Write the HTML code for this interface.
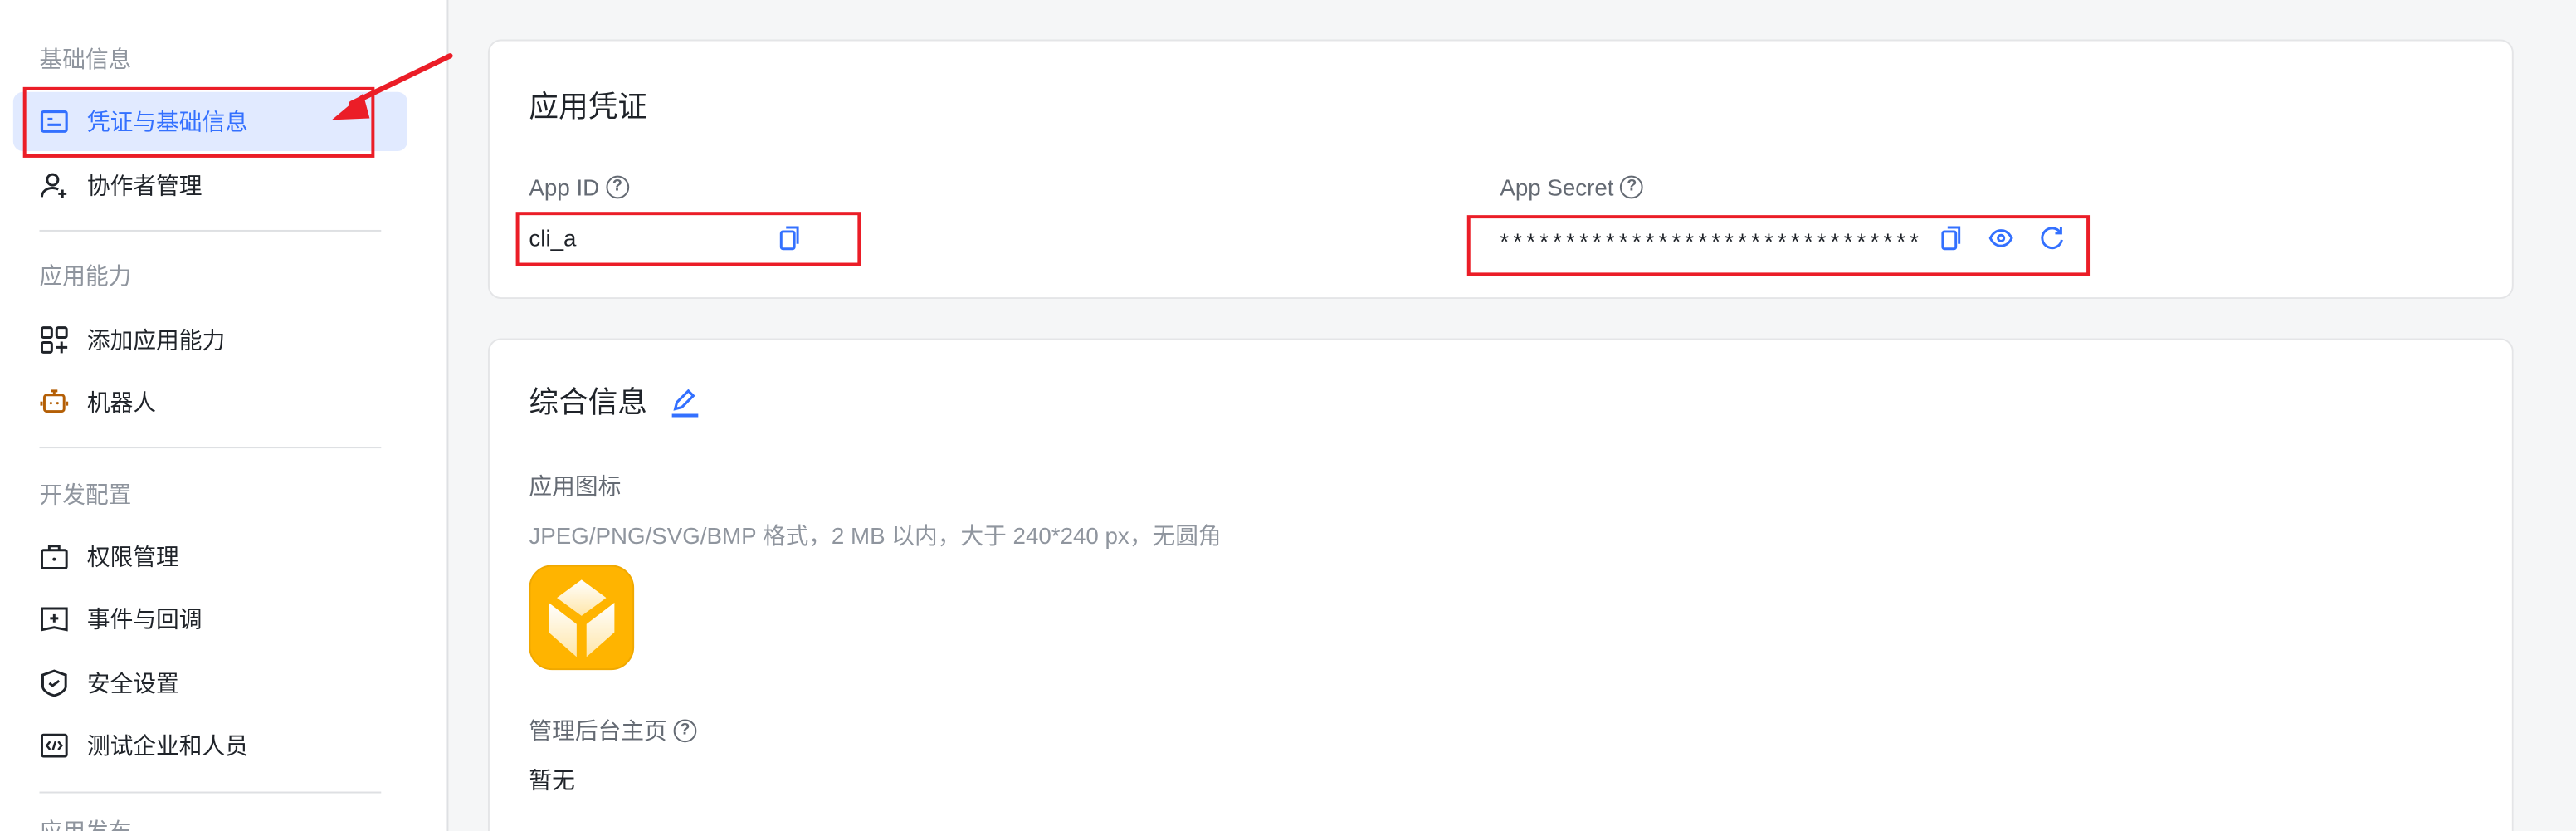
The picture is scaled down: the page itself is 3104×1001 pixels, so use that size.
<!DOCTYPE html>
<html><head><meta charset="utf-8">
<style>
html,body{margin:0;padding:0;overflow:hidden;}
body{width:3104px;height:1001px;overflow:hidden;background:#f5f6f7;font-family:"Liberation Sans","Noto Sans CJK SC",sans-serif;position:relative;}
#s{position:absolute;left:0;top:0;width:1568px;height:506px;overflow:hidden;transform:scale(1.9796,1.9783);transform-origin:0 0;}
.side{position:absolute;left:0;top:0;width:272px;height:506px;background:#fff;border-right:1px solid #dee0e3;overflow:hidden;}
.gt{position:absolute;left:24px;font-size:14px;color:#8f959e;line-height:20px;}
.it{position:absolute;left:24px;font-size:14px;color:#1f2329;line-height:20px;}
.it span{position:absolute;left:29px;top:0;white-space:nowrap;}
.it svg{position:absolute;left:0;top:1px;}
.dv{position:absolute;left:24px;width:208px;height:1px;background:#dee0e3;}
.card{position:absolute;left:297px;width:1231px;background:#fff;border:1px solid #e4e5e7;border-radius:8px;}
.t{position:absolute;font-size:18px;color:#1f2329;line-height:24px;}
.l{position:absolute;font-size:14px;color:#646a73;line-height:20px;white-space:nowrap;}
.v{position:absolute;font-size:14px;color:#1f2329;line-height:20px;white-space:nowrap;}
.q{position:relative;display:inline-block;width:12px;height:12px;border:1.3px solid #646a73;border-radius:50%;font-size:10px;line-height:12px;text-align:center;vertical-align:middle;top:-1px;margin-left:4px;color:#646a73;font-weight:bold;}
.red{position:absolute;border:2px solid #eb1d27;box-sizing:border-box;}
</style></head><body><div id="s">
<div class="side">
  <div class="gt" style="top:26px">基础信息</div>
  <div style="position:absolute;left:8px;top:56px;width:240px;height:36px;background:#e1eaff;border-radius:6px"></div>
  <div class="it" style="top:64px;color:#3370ff">
    <svg width="18" height="18" viewBox="0 0 18 18"><rect x="1.5" y="3" width="15" height="12" rx="1" fill="none" stroke="#3370ff" stroke-width="1.6"/><path d="M5 7.5h3M5 11h8" stroke="#3370ff" stroke-width="1.6"/></svg><span>凭证与基础信息</span></div>
  <div class="it" style="top:103px">
    <svg width="18" height="18" viewBox="0 0 18 18"><circle cx="8" cy="5.5" r="3.3" fill="none" stroke="#1f2329" stroke-width="1.5"/><path d="M1.5 16c0-3.5 3-5.5 6.5-5.5 1.5 0 2.5.3 3.5.8M14 11.5v5M11.5 14h5" fill="none" stroke="#1f2329" stroke-width="1.5"/></svg><span>协作者管理</span></div>
  <div class="dv" style="top:140px"></div>
  <div class="gt" style="top:158px">应用能力</div>
  <div class="it" style="top:197px">
    <svg width="18" height="18" viewBox="0 0 18 18"><rect x="1.5" y="1.5" width="6" height="6" rx="1" fill="none" stroke="#1f2329" stroke-width="1.5"/><rect x="10.5" y="1.5" width="6" height="6" rx="1" fill="none" stroke="#1f2329" stroke-width="1.5"/><rect x="1.5" y="10.5" width="6" height="6" rx="1" fill="none" stroke="#1f2329" stroke-width="1.5"/><path d="M13.5 10v7M10 13.5h7" stroke="#1f2329" stroke-width="1.5"/></svg><span>添加应用能力</span></div>
  <div class="it" style="top:235px">
    <svg width="18" height="18" viewBox="0 0 18 18"><rect x="3" y="4.5" width="12" height="10" rx="1.5" fill="none" stroke="#b45f06" stroke-width="1.5"/><path d="M9 2v2.5M7 2h4" stroke="#b45f06" stroke-width="1.5"/><circle cx="7" cy="9.5" r=".8" fill="#b45f06"/><circle cx="11" cy="9.5" r=".8" fill="#b45f06"/><rect x="0.5" y="8.5" width="1.5" height="2.5" fill="#b45f06"/><rect x="16" y="8.5" width="1.5" height="2.5" fill="#b45f06"/></svg><span>机器人</span></div>
  <div class="dv" style="top:272px"></div>
  <div class="gt" style="top:291px">开发配置</div>
  <div class="it" style="top:329px">
    <svg width="18" height="18" viewBox="0 0 18 18"><rect x="1.5" y="5" width="15" height="11" rx="1" fill="none" stroke="#1f2329" stroke-width="1.5"/><path d="M6 5V2.5h6V5" fill="none" stroke="#1f2329" stroke-width="1.5"/><circle cx="9" cy="10.5" r="1" fill="#1f2329"/></svg><span>权限管理</span></div>
  <div class="it" style="top:367px">
    <svg width="18" height="18" viewBox="0 0 18 18"><path d="M1.5 2.5h15v13l-7.5-1.5-7.5 1.5z" fill="none" stroke="#1f2329" stroke-width="1.5"/><path d="M9 6v5M6.5 8.5h5" stroke="#1f2329" stroke-width="1.5"/></svg><span>事件与回调</span></div>
  <div class="it" style="top:406px">
    <svg width="18" height="18" viewBox="0 0 18 18"><path d="M2 4l7-2.5 7 2.5v7c0 2.5-4 5-7 5.5-3-.5-7-3-7-5.5z" fill="none" stroke="#1f2329" stroke-width="1.5"/><path d="M6 9l2 1.5 4-3" fill="none" stroke="#1f2329" stroke-width="1.5"/></svg><span>安全设置</span></div>
  <div class="it" style="top:444px">
    <svg width="18" height="18" viewBox="0 0 18 18"><rect x="1.5" y="2.5" width="15" height="13" rx="1" fill="none" stroke="#1f2329" stroke-width="1.5"/><path d="M6.5 6.5L4.5 9l2 2.5M11.5 6.5l2 2.5-2 2.5M9.8 6.5l-1.6 5" fill="none" stroke="#1f2329" stroke-width="1.3"/></svg><span>测试企业和人员</span></div>
  <div class="dv" style="top:482px"></div>
  <div class="gt" style="top:496px;height:10px;overflow:hidden">应用发布</div>
</div>

<div class="card" style="top:24px;height:156px">
  <div class="t" style="left:24px;top:28px">应用凭证</div>
  <div class="l" style="left:24px;top:79px">App ID<span class="q">?</span></div>
  <div class="v" style="left:24px;top:110px">cli_a</div>
  <svg style="position:absolute;left:176px;top:112px" width="14" height="16" viewBox="0 0 14 16"><rect x="1.5" y="4" width="8" height="10.5" rx="1" fill="none" stroke="#3370ff" stroke-width="1.5"/><path d="M4.5 1.5h7v10" fill="none" stroke="#3370ff" stroke-width="1.5"/></svg>
  <div class="l" style="left:615px;top:79px">App Secret<span class="q">?</span></div>
  <div class="v" style="left:615px;top:112px;letter-spacing:2.6px;font-size:14px">********************************</div>
  <svg style="position:absolute;left:883px;top:112px" width="14" height="16" viewBox="0 0 14 16"><rect x="1.5" y="4" width="8" height="10.5" rx="1" fill="none" stroke="#3370ff" stroke-width="1.5"/><path d="M4.5 1.5h7v10" fill="none" stroke="#3370ff" stroke-width="1.5"/></svg>
  <svg style="position:absolute;left:912px;top:112px" width="16" height="16" viewBox="0 0 16 16"><path d="M1.5 8C3 5 5.3 3.3 8 3.3S13 5 14.5 8C13 11 10.7 12.7 8 12.7S3 11 1.5 8z" fill="none" stroke="#3370ff" stroke-width="1.5"/><circle cx="8" cy="8" r="1.8" fill="none" stroke="#3370ff" stroke-width="1.5"/></svg>
  <svg style="position:absolute;left:943px;top:112px" width="16" height="16" viewBox="0 0 16 16"><path d="M13 4.5A6 6 0 1 0 14 9" fill="none" stroke="#3370ff" stroke-width="1.5"/><path d="M13.5 1.5v3.5H10" fill="none" stroke="#3370ff" stroke-width="1.5"/></svg>
</div>

<div class="card" style="top:206px;height:300px;border-bottom:none;border-radius:8px 8px 0 0">
  <div class="t" style="left:24px;top:26px">综合信息</div>
  <svg style="position:absolute;left:109px;top:28px" width="20" height="20" viewBox="0 0 20 20"><path d="M4 14l1-4 7-7 3 3-7 7z" fill="none" stroke="#3370ff" stroke-width="1.6"/><path d="M2 18h16" stroke="#3370ff" stroke-width="2"/></svg>
  <div class="l" style="left:24px;top:79px">应用图标</div>
  <div class="l" style="left:24px;top:109px;color:#8f959e">JPEG/PNG/SVG/BMP 格式，2 MB 以内，大于 240*240 px，无圆角</div>
  <div style="position:absolute;left:24px;top:137px;width:64px;height:64px;border-radius:14px;background:#ffb400;border:1px solid #f0a800;box-sizing:border-box">
    <svg width="64" height="64" viewBox="0 0 64 64" style="position:absolute;left:-1px;top:-1px"><defs><linearGradient id="g" x1="0" y1="0" x2="0" y2="1"><stop offset="0" stop-color="#fff"/><stop offset="1" stop-color="#ffe6a8"/></linearGradient></defs><path d="M32 9l15 11-15 11-15-11z" fill="url(#g)"/><path d="M12 23l17 13v20L12 41z" fill="url(#g)"/><path d="M52 23L35 36v20l17-15z" fill="url(#g)"/></svg>
  </div>
  <div class="l" style="left:24px;top:228px">管理后台主页<span class="q">?</span></div>
  <div class="v" style="left:24px;top:258px">暂无</div>
</div>

<div class="red" style="left:14px;top:53px;width:214px;height:43px"></div>
<div class="red" style="left:314px;top:129px;width:210px;height:33px"></div>
<div class="red" style="left:893px;top:131px;width:379px;height:37px"></div>
<svg style="position:absolute;left:0;top:0" width="300" height="100" viewBox="0 0 300 100"><path d="M274 34L214 63" stroke="#eb1d27" stroke-width="3.2" stroke-linecap="round"/><path d="M202 73L221 57l4 15z" fill="#eb1d27"/></svg>
</div></body></html>
